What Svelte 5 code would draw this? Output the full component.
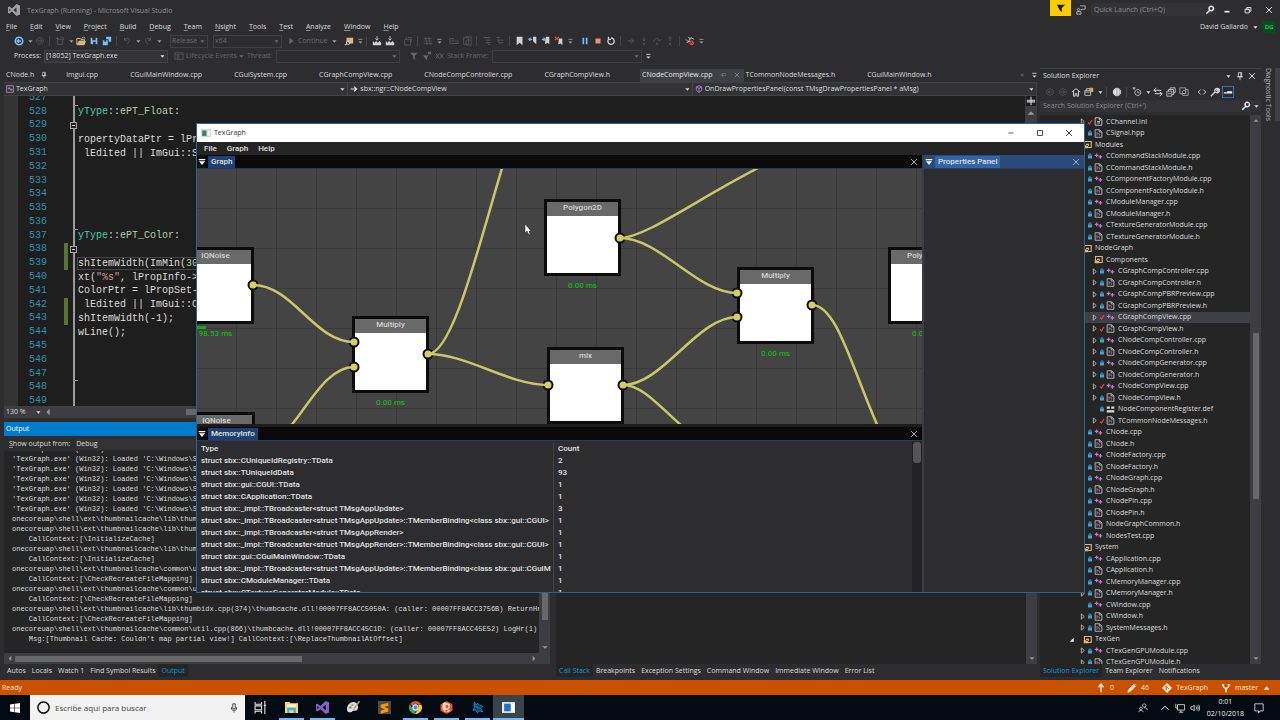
<script lang="ts">
  type Part = { d: string; fill?: string; stroke?: string; width?: number };

  const light = '#d0d0d0';
  const dim = '#56565a';
  const blue = '#75beff';
  const gold = '#dcb67a';

  const icons: Record<string, Part[]> = {
    back: [{ d: 'M6 1.5a4.5 4.5 0 1 0 .01 0M8.5 6H3.8M6 4 3.8 6 6 8', stroke: blue, width: 1.8 }],
    forward: [{ d: 'M6 2a4 4 0 1 0 .01 0M3.5 6h4.7M6 4l2.2 2L6 8', stroke: dim }],
    newItem: [{ d: 'M3 4h6v6H3zM1 3h4M3 1v4M6 2h4v3', stroke: dim }],
    open: [
      { d: 'M1 10V3h4l1 1h4v2H4z', stroke: gold, width: 1.2 },
      { d: 'M4 6h8l-2 5H1z', fill: gold },
      { d: 'M7 3 9 1l2 2', stroke: light },
    ],
    save: [{ d: 'M2 2h8v8H3L2 9zM4 2v3h4V2zM5 7v3h3V7z', fill: blue }],
    saveAll: [{ d: 'M5 1h6v6H8V4H5zM1 5h6v6H1zM3 5v2h2V5z', fill: blue }],
    undo: [{ d: 'M3 2v3h3M3 5c2-3 6-3 6 0 0 2-2 3-3 5', stroke: dim, width: 1.2 }],
    redo: [{ d: 'M9 2v3H6M9 5C7 2 3 2 3 5c0 2 2 3 3 5', stroke: dim, width: 1.2 }],
    play: [{ d: 'M4 2v8l5-4z', fill: '#66666a' }],
    find: [
      { d: 'M3 2h8v7H7L3 6z', fill: gold },
      { d: 'M5 6a2 2 0 1 0 .01 0M4 9l-3 2', stroke: light, width: 1.3 },
    ],
    build: [
      { d: 'M1 11V6l2 2 2-2 2 2 2-2 2 2v3z', fill: light },
      { d: 'M6 0v5M4 3l2 2 2-2', stroke: light },
    ],
    clip: [{ d: 'M2 4h7v7H2zM4 1v3M6 2h4v5', stroke: dim }],
    grid: [{ d: 'M1 3h10M1 6h10M1 9h10M3 1l2 10M7 1l2 10', stroke: dim }],
    box: [{ d: 'M1 3v6h10V6H5V3zM1 6h4', stroke: dim }],
    boxes: [{ d: 'M2 2h6v8H2zM5 5h6v6H5zM4 1h7v3', stroke: dim }],
    indent: [{ d: 'M2 2h8M5 5h5M5 8h5M7 10h3', stroke: dim, width: 1.2 }],
    outdent: [{ d: 'M2 2h4M4 5h6M6 8h4M3 4l3 6', stroke: dim, width: 1.2 }],
    bookmark: [{ d: 'M2 1h7v10L5.5 8 2 11z', fill: light }],
    markPrev: [
      { d: 'M6 1h4v9L8 8 6 6z', fill: light },
      { d: 'M5 4H1M3 2 1 4l2 2', stroke: blue, width: 1.3 },
    ],
    markNext: [
      { d: 'M6 1h4v9L8 8 5 10V6z', fill: light },
      { d: 'M1 4h4M3 2l2 2-2 2', stroke: blue, width: 1.3 },
    ],
    markClear: [
      { d: 'M6 3h4v8L8 9l-3 1z', fill: light },
      { d: 'M1 1l5 4M6 1 1 5', stroke: '#f05a3c', width: 1.3 },
    ],
    pause: [{ d: 'M3 2h2v8H3zM7 2h2v8H7z', fill: blue }],
    stop: [{ d: 'M3 3h6v6H3z', fill: '#f0907c' }],
    restart: [{ d: 'M3 4a3.8 3.8 0 1 0 3-1.6M3 1v3h3', stroke: light, width: 1.6 }],
    next: [{ d: 'M2 6h7M6 3l3 3-3 3', stroke: dim, width: 1.2 }],
    stepInto: [{ d: 'M6 1v5M4 4l2 2 2-2M5 9h2v1H5z', stroke: dim }],
    stepOver: [{ d: 'M2 7c0-5 7-5 7-1M7 4l2 2 2-2M5 9h2v1H5z', stroke: dim }],
    stepOut: [{ d: 'M6 6V1M4 3l2-2 2 2M5 9h2v1H5z', stroke: dim }],
    breakAll: [
      { d: 'M1 4l3 3 3-5 4 2M2 8l4-2M4 1l2 3', stroke: light },
      { d: 'M8 6a2.2 2.2 0 1 0 .01 0M6.5 10 10 7', stroke: '#f04040', width: 1.3 },
    ],
    filter: [{ d: 'M1 2h9L7 6v5L5 9V6z', fill: '#66666a' }],
    filterX: [{ d: 'M1 5h7L6 8v3L4 9zM7 1h4v3H7z', fill: '#66666a' }],
    threads: [{ d: 'M1 3l4 6M5 3 1 9M6 3l4 6M10 3 6 9', stroke: '#66666a' }],
    events: [{ d: 'M1 2h10v8H1zM1 4h10M4 5l3 2-3 2z', stroke: dim }],
    home: [{ d: 'M1 6l5-4 5 4M3 5v6h2V8h2v3h2V5', stroke: light, width: 1.2 }],
    sync: [
      { d: 'M1 4h7v6H1zM3 4V2h4v2M1 6h7', stroke: light },
      { d: 'M7 1h4v5H8z', fill: '#e0a54f' },
    ],
    globe: [
      { d: 'M6 1a5 5 0 1 0 .01 0', fill: '#dcdcdc' },
      { d: 'M6 1v10M8 2c2 2 2 6 0 8', stroke: '#9a9a9a' },
    ],
    history: [{ d: 'M7 3a3.6 3.6 0 1 0 .01 0M7 5v2h2M1 1h3L2.5 3z', stroke: light }],
    swap: [{ d: 'M1 4h9M4 1 1 4l3 2M11 8H2M8 6l3 2-3 3', stroke: light, width: 1.2 }],
    collapse: [{ d: 'M1 5h6v6H1zM3 5V3h6v6H7M5 3V1h6v6H9M2.5 8h3', stroke: light }],
    showAll: [{ d: 'M1 1h7v7H1zM8 3h3v7H4V8M6 4a2 2 0 1 0 .01 0', stroke: '#a8a8a8' }],
    code: [{ d: 'M4.5 3 1.5 6l3 3M7.5 3l3 3-3 3', stroke: light, width: 1.2 }],
    wrench: [{ d: 'M1 11l5-5M6 6c-1-3 1-5 4-4L8 4l1 1 2-2c1 3-2 5-5 3', stroke: light, width: 1.6 }],
    preview: [{ d: 'M1 7h10M5 6h6', stroke: '#f0f0f0', width: 1.6 }],
    search: [{ d: 'M7.5 1.5a2.7 2.7 0 1 0 .01 0M5.5 6.5 1.5 10.5', stroke: '#f0f0f0', width: 1.8 }],
    close: [{ d: 'M2.5 2.5l7 7M9.5 2.5l-7 7', stroke: 'currentColor', width: 1.2 }],
    maximize: [{ d: 'M3 3h6v6H3z', stroke: 'currentColor' }],
    minimize: [{ d: 'M3 6h6', stroke: 'currentColor' }],
    minimizeBold: [{ d: 'M3 8h6', stroke: '#f0f0f0', width: 2 }],
    restore: [{ d: 'M2.5 5h5v4.5h-5zM4.5 5V3h5v4.5h-2M2.5 5.5h5', stroke: '#d8d8d8', width: 1.2 }],
    pin: [{ d: 'M4 2h4v5H4zM2.5 7h7M6 7v4M7 2v5', stroke: 'currentColor' }],
    pinSide: [{ d: 'M1 6h4M5 3v6M5 4h5v3H5z', stroke: '#77777c' }],
    caret: [{ d: 'M4 5h5L6.5 8z', fill: 'currentColor' }],
    caretBar: [
      { d: 'M4 4h5', stroke: 'currentColor' },
      { d: 'M4 6.5h5L6.5 9z', fill: 'currentColor' },
    ],
    vs: [{ d: 'M8.5 0 12 1.5v9L8.5 12 4 7.5 1.5 9.5 0 9V3l1.5-.5L4 4.5zM8.5 3.5 5.5 6l3 2.5zM1.3 4.5v3L2.8 6z', fill: '#a0a0a4' }],
    flag: [{ d: 'M1 2h10L7 6v5L4.5 8.5z', fill: '#1b1b1c' }],
    feedback: [{ d: 'M5 1h6v4H8L6 6V5M3 4a1.5 1.5 0 1 0 .01 0M1 11V8h5v3z', stroke: '#c0c0c0' }],
    cpp: [{ d: 'M3.5 2v5M1 4.5h5M8.5 4v5M6 6.5h5', stroke: '#c177c9', width: 1.7 }],
    header: [
      { d: 'M1.5 1h6l3 3v7h-9zM7 1v3h3', stroke: '#bdbdbd', width: 1.2 },
      { d: 'M4 4v5M4 6.5h3.5V9', stroke: '#b57bc0' },
    ],
    doc: [{ d: 'M1.5 1h6l3 3v7h-9zM7 1v3h3M4 6h4M4 8h4', stroke: '#c8c8c8', width: 1.2 }],
    def: [{ d: 'M1 2h4v3H1zM7 2h4v3H7zM1 7h10v3H1z', fill: '#d8d8d8' }],
    folder: [
      { d: 'M2 10V2h9v8z', stroke: gold, width: 1.5 },
      { d: 'M1 7h6v4H1zM4 5h4v3H4z', fill: gold },
    ],
    lock: [
      { d: 'M2 5h8v6H2z', fill: '#3fa3d6' },
      { d: 'M4 6V2h4v4', stroke: '#3fa3d6', width: 1.6 },
    ],
    check: [{ d: 'M2 7l3 3 5-8', stroke: '#e8403c', width: 2.4 }],
    expanded: [{ d: 'M10 3v7H3z', fill: '#f0f0f0' }],
    collapsed: [{ d: 'M4 1.5 9 6l-5 4.5z', stroke: '#c8c8c8', width: 1.4 }],
    up: [{ d: 'M2 8h8L6 4z', fill: '#999' }],
    down: [{ d: 'M2 4h8L6 8z', fill: '#999' }],
    left: [{ d: 'M8 2v8L4 6z', fill: '#999' }],
    right: [{ d: 'M4 2v8l4-4z', fill: '#999' }],
    project: [
      { d: 'M1 1h10v10H1z', stroke: '#b9b9b9' },
      { d: 'M4.5 3v4M2.5 5h4M8 5v4M6 7h4', stroke: '#c177c9', width: 1.3 },
    ],
    arrow: [{ d: 'M1 6h9M6 2.5 10 6l-4 3.5', stroke: '#e0e0e0', width: 1.8 }],
    method: [{ d: 'M6 1l4 2v5l-4 3-4-3V3zM2 3l4 2 4-2M6 5v6', stroke: '#b180d7', width: 1.3 }],
    split: [{ d: 'M1 5h10M1 7h10M6 1v10', stroke: '#d8d8d8', width: 1.3 }],
    panelMenu: [{ d: 'M1 1.5h10v2H1zM1.5 5h9L6 10.5z', fill: '#fff' }],
    app: [
      { d: 'M0 1h12v10H0z', fill: '#d7d7d7' },
      { d: 'M1.5 3h5v6.5h-5z', fill: '#37806b' },
      { d: 'M8 3h2.5v6.5H8z', fill: '#f8f8f8' },
    ],
    push: [{ d: 'M6 11V2M3 5l3-3.5L9 5', stroke: '#ffe7d6', width: 1.8 }],
    pencil: [{ d: 'M1 11l1-3 6-6 2 2-6 6zM9 1l2 2', fill: '#ffe7d6', stroke: '#ffe7d6' }],
    git: [
      { d: 'M6 0l6 6-6 6-6-6z', fill: '#ffe7d6' },
      { d: 'M5 3v6M5 4l3 3', stroke: '#ca5100', width: 1.2 },
    ],
    branch: [{ d: 'M2.5 2v1c0 3 3.5 2 3.5 5v3M9.5 2v1c0 3-3.5 2-3.5 5M1 2h3M8 2h3', stroke: '#ffe7d6', width: 1.8 }],
    caretUp: [{ d: 'M2 8h7L5.5 4z', fill: '#ffe7d6' }],
    windows: [{ d: 'M0 1.8 5.3 1v4.7H0zM6 .9 12 0v5.7H6zM0 6.3h5.3V11L0 10.2zM6 6.3h6V12l-6-.9z', fill: '#fff' }],
    cortana: [{ d: 'M6 .9a5.1 5.1 0 1 0 .01 0', stroke: '#111', width: 1.4 }],
    mic: [{ d: 'M4.5 1h3v6h-3zM3 5v2.500C3 9 9 9 9 7.5V5M6 9v2.5', stroke: '#333' }],
    taskView: [{ d: 'M1 1v2h6V1M1 4.5h6V8H1zM1 11.5v-2h6v2M10 0v12M9 4h2', stroke: '#e4e4e4' }],
    explorer: [
      { d: 'M0 1h4l1 1h7v9H0z', fill: '#f6d673' },
      { d: 'M2 3h8v4H2z', fill: '#fff2b8' },
      { d: 'M2 6h8v5H8V8.5H4V11H2z', fill: '#4aa8e0' },
    ],
    vsTask: [{ d: 'M9 0l3 1.3v9.4L9 12 4 7.5 1.5 9.5 0 9V3l1.5-.5L4 4.5zM9 3.5 6 6l3 2.5zM1.3 4.5v3L2.8 6z', fill: '#8661c5' }],
    paint: [
      { d: 'M6 1C2 1 0 5 0 7.5 0 11 4 11 5 9.5S8 10 9.5 8 10 1 6 1z', fill: '#d4e2ee' },
      { d: 'M2 5h2v2H2z', fill: '#e4573d' },
      { d: 'M4 3h2v1.5H4z', fill: '#5dae4c' },
      { d: 'M11.5 0 6 8', stroke: '#d79b55', width: 1.3 },
    ],
    sublime: [
      { d: 'M0 0h12v12H0z', fill: '#4b4b4b' },
      { d: 'M9.5 1.5v2.8L5.5 5.5l4 1.4v2.8l-7 2V9l4-1.3-4-1.4V3.5z', fill: '#ff9800' },
    ],
    chrome: [
      { d: 'M6 0a6 6 0 0 1 5.3 3.2H6A2.8 2.8 0 0 0 3.4 5L1 2.7A6 6 0 0 1 6 0z', fill: '#e24a3b' },
      { d: 'M.8 3 3.5 7.4A2.8 2.8 0 0 0 6.5 8.7L5 12A6 6 0 0 1 .8 3z', fill: '#3aa757' },
      { d: 'M11.4 3.4A6 6 0 0 1 5.3 12L8.5 7.3A2.8 2.8 0 0 0 8 3.4z', fill: '#f9c927' },
      { d: 'M6 3.5a2.5 2.5 0 1 0 .01 0', fill: '#4a8af4', stroke: '#fff' },
    ],
    origin: [
      { d: 'M6 0l5.5 3v6L6 12 .5 9V3z', fill: '#e4572e' },
      { d: 'M4.5 10V4.500c0-2.500 4-2.500 4 .3S6 8 4.500 7M3 8V4c0-1 1-2 2-2.500M9 8.500l-2.500 1.500', stroke: '#fff', width: 1.1 },
    ],
    claw: [
      { d: 'M3 1l2 3 1-2 2 2 3 1-2 2 2 3-4-1-1 2-2-3-2 1 1-3-1-2z', fill: '#0b4468' },
      { d: 'M3 1l2 3 1-2 2 2 3 1-2 2 2 3-4-1-1 2-2-3-2 1 1-3zM4 5l4 2', stroke: '#2a8fd0', width: 0.8 },
    ],
    appTask: [
      { d: 'M0 1h12v10H0z', fill: '#eaeaea' },
      { d: 'M2 2.5h6v7H2z', fill: '#1f6fd0' },
      { d: 'M8.5 2.5H11v7H8.5z', fill: '#fff' },
    ],
    people: [{ d: 'M7.5 1a2 2 0 1 0 .01 0M3.5 5a1.6 1.6 0 1 0 .01 0M1 11c0-3 5-3 5 0M7 6c2-1 4 0 4 2.5', stroke: '#e4e4e4' }],
    chevronUp: [{ d: 'M1.5 8 6 4l4.5 4', stroke: '#e4e4e4', width: 1.2 }],
    network: [{ d: 'M3 2h8.5v6.5H3zM1 1v5h2M5 11h5M7 8.5V11', stroke: '#e4e4e4' }],
    volume: [{ d: 'M1 4.5h2L5 2.5v7l-2-2H1zM7 4c1 1 1 3 0 4M8.5 3c1.8 2 1.8 4 0 6M10 2c2.3 2.5 2.3 5.5 0 8', stroke: '#e4e4e4' }],
    notice: [{ d: 'M1 1h10v8.5H7.5L5.5 12V9.5H1z', stroke: '#e4e4e4' }],
  };
  icons.backOff = [{ d: 'M6 2a4 4 0 1 0 .01 0M8.5 6H3.8M6 4 3.8 6 6 8', stroke: dim }];

  const menus = ['File', 'Edit', 'View', 'Project', 'Build', 'Debug', 'Team', 'Nsight', 'Tools', 'Test', 'Analyze', 'Window', 'Help'];

  const toolbarStart = ['back', 'caret', 'forward', '|', 'newItem', 'caret', 'open', 'save', 'saveAll', '|', 'undo', 'caret', 'redo', 'caret', ' '];
  const toolbarEnd = [
    'caret', ' ', 'find', 'caretBar', '|', 'build', 'build', ' ', 'clip', '|', 'grid', 'caretBar', ' ', 'box', 'boxes', '|',
    'indent', 'outdent', '|', 'bookmark', 'markPrev', 'markNext', 'markClear', 'caretBar', ' ', 'pause', 'stop', 'restart', '|',
    'next', 'stepInto', 'stepOver', 'stepOut', '|', 'breakAll', 'caretBar',
  ];

  const tabs = [
    'CNode.h', 'imgui.cpp', 'CGuiMainWindow.cpp', 'CGuiSystem.cpp', 'CGraphCompView.cpp', 'CNodeCompController.cpp',
    'CGraphCompView.h', 'CNodeCompView.cpp', 'TCommonNodeMessages.h', 'CGuiMainWindow.h',
  ];
  let activeTab = 'CNodeCompView.cpp';

  const scopes = [
    { icon: 'project', text: 'TexGraph' },
    { icon: 'arrow', text: 'sbx::ngr::CNodeCompView' },
    { icon: 'method', text: 'OnDrawPropertiesPanel(const TMsgDrawPropertiesPanel * aMsg)' },
  ];

  // token kinds: t type, e enum value, s string, n number
  const source: Record<number, string[][]> = {
    528: [['t', 'yType'], ['', '::'], ['e', 'ePT_Float'], ['', ':']],
    530: [['', 'ropertyDataPtr = lPro']],
    531: [['', ' lEdited || ImGui::Sl']],
    537: [['t', 'yType'], ['', '::'], ['e', 'ePT_Color'], ['', ':']],
    539: [['', 'shItemWidth(ImMin('], ['n', '300']],
    540: [['', 'xt('], ['s', '"%s"'], ['', ', lPropInfo->n']],
    541: [['', 'ColorPtr = lPropSet->']],
    542: [['', ' lEdited || ImGui::Co']],
    543: [['', 'shItemWidth(-1);']],
    544: [['', 'wLine();']],
  };
  const changed = [538, 539, 542, 543];
  const folds = [529, 538];
  const ticks = [528, 537, 548];
  const lines = Array.from({ length: 23 }, (_, i) => 527 + i);

  const load = `'TexGraph.exe' (Win32): Loaded 'C:\\Windows\\Sys`;
  const cache = 'onecoreuap\\shell\\ext\\thumbnailcache\\';
  const initialize = '    CallContext:[\\InitializeCache]';
  const recreate = '    CallContext:[\\CheckRecreateFileMapping]';
  const output = [
    load, load, load, load, load, load, load,
    cache + 'lib\\thumbc',
    cache + 'lib\\thumbc',
    initialize,
    cache + 'lib\\thumbc',
    initialize,
    cache + 'common\\uti',
    recreate,
    cache + 'common\\uti',
    recreate,
    cache + 'lib\\thumbidx.cpp(374)\\thumbcache.dll!00007FF8ACC5050A: (caller: 00007FF8ACC3756B) ReturnHr(13) t',
    recreate,
    cache + 'common\\util.cpp(866)\\thumbcache.dll!00007FF8ACC45C1D: (caller: 00007FF8ACC45E52) LogHr(1) tid(17',
    `    Msg:[Thumbnail Cache: Couldn't map partial view!] CallContext:[\\ReplaceThumbnailAtOffset]`,
  ];

  const outputTabs = ['Autos', 'Locals', 'Watch 1', 'Find Symbol Results', 'Output'];
  const debugTabs = ['Call Stack', 'Breakpoints', 'Exception Settings', 'Command Window', 'Immediate Window', 'Error List'];
  const explorerTabs = ['Solution Explorer', 'Team Explorer', 'Notifications'];
  const explorerTools = ['backOff', 'forward', 'home', 'sync', 'caret', '|', 'globe', '|', 'history', 'caret', 'swap', 'collapse', 'showAll', ' ', 'code', 'wrench'];

  // depth, name, flags: m modified, x no expander, f folder
  const tree: [number, string, string][] = [
    [1, 'CChannel.inl', 'm'], [1, 'CSignal.hpp', ''],
    [0, 'Modules', 'f'],
    [1, 'CCommandStackModule.cpp', ''], [1, 'CCommandStackModule.h', ''],
    [1, 'CComponentFactoryModule.cpp', ''], [1, 'CComponentFactoryModule.h', ''],
    [1, 'CModuleManager.cpp', ''], [1, 'CModuleManager.h', ''],
    [1, 'CTextureGeneratorModule.cpp', ''], [1, 'CTextureGeneratorModule.h', ''],
    [0, 'NodeGraph', 'f'], [1, 'Components', 'f'],
    [2, 'CGraphCompController.cpp', ''], [2, 'CGraphCompController.h', ''],
    [2, 'CGraphCompPBRPreview.cpp', ''], [2, 'CGraphCompPBRPreview.h', ''],
    [2, 'CGraphCompView.cpp', 'm'], [2, 'CGraphCompView.h', 'm'],
    [2, 'CNodeCompController.cpp', ''], [2, 'CNodeCompController.h', ''],
    [2, 'CNodeCompGenerator.cpp', ''], [2, 'CNodeCompGenerator.h', ''],
    [2, 'CNodeCompView.cpp', 'm'], [2, 'CNodeCompView.h', ''],
    [2, 'NodeComponentRegister.def', 'x'], [2, 'TCommonNodeMessages.h', 'm'],
    [1, 'CNode.cpp', ''], [1, 'CNode.h', ''], [1, 'CNodeFactory.cpp', ''], [1, 'CNodeFactory.h', ''],
    [1, 'CNodeGraph.cpp', ''], [1, 'CNodeGraph.h', ''], [1, 'CNodePin.cpp', ''], [1, 'CNodePin.h', ''],
    [1, 'NodeGraphCommon.h', ''], [1, 'NodesTest.cpp', ''],
    [0, 'System', 'f'],
    [1, 'CApplication.cpp', ''], [1, 'CApplication.h', ''], [1, 'CMemoryManager.cpp', ''], [1, 'CMemoryManager.h', ''],
    [1, 'CWindow.cpp', 'x'], [1, 'CWindow.h', ''], [1, 'SystemMessages.h', ''],
    [0, 'TexGen', 'f'],
    [1, 'CTexGenGPUModule.cpp', ''], [1, 'CTexGenGPUModule.h', ''],
  ];

  function fileIcon(name: string, flags: string) {
    if (flags === 'f') return 'folder';
    if (name.endsWith('.cpp')) return 'cpp';
    if (name.endsWith('.inl')) return 'doc';
    if (name.endsWith('.def')) return 'def';
    return 'header';
  }

  const nodes = [
    { title: 'IQNoise', time: '98.53 ms', x: -20, y: 78, load: true },
    { title: 'IQNoise', time: '', x: -19, y: 243 },
    { title: 'Multiply', time: '0.00 ms', x: 155, y: 147 },
    { title: 'Polygon2D', time: '0.00 ms', x: 347, y: 30 },
    { title: 'mix', time: '', x: 350, y: 178 },
    { title: 'Multiply', time: '0.00 ms', x: 540, y: 98 },
    { title: 'Polygon2D', time: '0.00 ms', x: 691, y: 78 },
  ];

  const wires = [
    'M56 116C96 116 117 173 157 173',
    'M57 281C97 281 117 198 157 198',
    'M231 185C271 185 311 216 351 216',
    'M231 185C256 185 282 75 306-4',
    'M423 69C448 69 500 30 563-2',
    'M423 69C463 69 500 124 540 124',
    'M426 216C466 216 500 148 540 148',
    'M426 216C446 216 465 240 485 257',
    'M615 136C640 136 655 200 682 260',
  ];
  const pins = [[56, 116], [157, 173], [157, 198], [231, 185], [423, 69], [351, 216], [426, 216], [540, 124], [540, 148], [615, 136]];

  const memory: [string, number][] = [
    ['struct sbx::CUniqueIdRegistry::TData', 2],
    ['struct sbx::TUniqueIdData', 93],
    ['struct sbx::gui::CGUI::TData', 1],
    ['struct sbx::CApplication::TData', 1],
    ['struct sbx::_impl::TBroadcaster<struct TMsgAppUpdate>', 3],
    ['struct sbx::_impl::TBroadcaster<struct TMsgAppUpdate>::TMemberBinding<class sbx::gui::CGUI>', 1],
    ['struct sbx::_impl::TBroadcaster<struct TMsgAppRender>', 1],
    ['struct sbx::_impl::TBroadcaster<struct TMsgAppRender>::TMemberBinding<class sbx::gui::CGUI>', 1],
    ['struct sbx::gui::CGuiMainWindow::TData', 1],
    ['struct sbx::_impl::TBroadcaster<struct TMsgAppUpdate>::TMemberBinding<class sbx::gui::CGuiM', 1],
    ['struct sbx::CModuleManager::TData', 1],
    ['struct sbx::CTextureGeneratorModule::TData', 1],
  ];

  const apps = [
    { icon: 'taskView', running: false },
    { icon: 'explorer', running: true },
    { icon: 'vsTask', running: true },
    { icon: 'paint', running: false },
    { icon: 'sublime', running: false },
    { icon: 'chrome', running: true },
    { icon: 'origin', running: true },
    { icon: 'claw', running: true },
    { icon: 'appTask', running: true },
  ];
</script>

{#snippet icon(name: string)}
  <svg class="icon" viewBox="0 0 12 12" aria-hidden="true">
    {#each icons[name] as part}
      <path d={part.d} fill={part.fill ?? 'none'} fill-rule="evenodd" stroke={part.stroke ?? 'none'} stroke-width={part.width ?? 1} />
    {/each}
  </svg>
{/snippet}

{#snippet tools(names: string[])}
  {#each names as name}
    {#if name === '|'}
      <span class="sep"></span>
    {:else if name === ' '}
      <span class="space"></span>
    {:else}
      <button class="tool" class:narrow={name.startsWith('caret')} aria-label={name}>{@render icon(name)}</button>
    {/if}
  {/each}
{/snippet}

{#snippet dockTabs(names: string[], current: string)}
  <div class="dock-tabs">
    {#each names as name}
      <button class:current={name === current}>{name}</button>
    {/each}
  </div>
{/snippet}

<div class="desktop">
  <header class="titlebar">
    <span class="logo">{@render icon('vs')}</span>
    <span class="title">TexGraph (Running) - Microsoft Visual Studio</span>
    <button class="flag" aria-label="Notifications">{@render icon('flag')}</button>
    <button class="tool feedback" aria-label="Feedback">{@render icon('feedback')}</button>
    <label class="quick">
      <input type="text" placeholder="Quick Launch (Ctrl+Q)" aria-label="Quick Launch" />
      {@render icon('search')}
    </label>
    <div class="win-buttons">
      <button class="tool" aria-label="Minimize">{@render icon('minimizeBold')}</button>
      <button class="tool" aria-label="Restore">{@render icon('restore')}</button>
      <button class="tool" aria-label="Close">{@render icon('close')}</button>
    </div>
  </header>

  <nav class="menubar">
    {#each menus as menu}
      <button><u>{menu[0]}</u>{menu.slice(1)}</button>
    {/each}
    <div class="account">
      <span>David Gallardo</span>
      <span class="tool narrow">{@render icon('caret')}</span>
      <span class="avatar">DG</span>
    </div>
  </nav>

  <div class="toolbar">
    {@render tools(toolbarStart)}
    <div class="combo config">
      <select aria-label="Configuration" disabled><option>Release</option></select>{@render icon('caret')}
    </div>
    <div class="combo platform">
      <select aria-label="Platform" disabled><option>x64</option></select>{@render icon('caret')}
    </div>
    <button class="tool" aria-label="Run">{@render icon('play')}</button>
    <button class="continue" disabled>Continue</button>
    {@render tools(toolbarEnd)}
  </div>

  <div class="toolbar process">
    <label for="process">Process:</label>
    <div class="combo wide on">
      <select id="process"><option>[18052] TexGraph.exe</option></select>{@render icon('caret')}
    </div>
    <button class="tool events" aria-label="Events">{@render icon('events')}</button>
    <span class="off">Lifecycle Events</span>
    <button class="tool narrow off" aria-label="More events">{@render icon('caret')}</button>
    <label class="off thread" for="thread">Thread:</label>
    <div class="combo wide">
      <select id="thread" disabled><option></option></select>{@render icon('caret')}
    </div>
    <span class="space"></span>
    {@render tools(['filter', 'filterX', 'threads'])}
    <label class="off" for="frame">Stack Frame:</label>
    <div class="combo frame">
      <select id="frame" disabled><option></option></select>{@render icon('caret')}
    </div>
    <span class="tool narrow">{@render icon('caretBar')}</span>
  </div>

  <main class="workspace">
    <section class="left">
      <div class="tabs">
        {#each tabs as tab}
          <button class="tab" class:active={tab === activeTab} on:click={() => (activeTab = tab)}>
            {tab}
            {#if tab === 'CNode.h'}
              <span class="tab-icon pinned">{@render icon('pin')}</span>
            {:else if tab === activeTab}
              <span class="tab-icon">{@render icon('pinSide')}</span>
              <span class="tab-icon">{@render icon('close')}</span>
            {/if}
          </button>
        {/each}
        <span class="overflow">«</span>
        <button class="tool narrow" aria-label="Open files">{@render icon('caretBar')}</button>
      </div>
      <div class="scopes">
        {#each scopes as scope}
          <div class="scope">
            {@render icon(scope.icon)}
            <select aria-label="Scope"><option>{scope.text}</option></select>
            {@render icon('caret')}
          </div>
        {/each}
      </div>
      <div class="editor">
        <div class="lines">
          {#each lines as n}
            <div class="line">
              <span class="margin"></span>
              <span class="number">{n}</span>
              <span class="change" class:changed={changed.includes(n)}></span>
              <span class="fold" class:tick={ticks.includes(n)}>
                {#if folds.includes(n)}<span class="fold-box"></span>{/if}
              </span>
              <code class:cursor-line={n === 539}>{#each source[n] ?? [] as [kind, text]}<span class={kind}>{text}</span>{/each}</code>
            </div>
          {/each}
        </div>
        <div class="editor-bar">
          {@render icon('split')}
          {@render icon('up')}
        </div>
      </div>
      <div class="zoom-bar">
        <span>130 %</span>
        {@render icon('caret')}
        {@render icon('left')}
        <span class="zoom-thumb"></span>
      </div>

      <div class="docks">
        <section class="dock output">
          <h2>Output</h2>
          <div class="output-from">
            <label for="from"><u>S</u>how output from:</label>
            <select id="from"><option>Debug</option></select>
          </div>
          <div class="output-body">
            <pre>{output.join('\n')}</pre>
            <div class="vbar">
              <span class="vthumb"></span>
              {@render icon('down')}
            </div>
          </div>
          <div class="hbar">
            {@render icon('left')}
            <span class="hthumb"></span>
            {@render icon('right')}
          </div>
          {@render dockTabs(outputTabs, 'Output')}
        </section>
        <section class="dock calls">
          <div class="output-body">
            <div class="blank"></div>
            <div class="vbar">{@render icon('down')}</div>
          </div>
          {@render dockTabs(debugTabs, 'Call Stack')}
        </section>
      </div>
    </section>

    <aside class="explorer">
      <div class="explorer-head">
        <h2>Solution Explorer</h2>
        <span class="tool">{@render icon('caret')}</span>
        <button class="tool" aria-label="Pin">{@render icon('pin')}</button>
        <button class="tool" aria-label="Close panel">{@render icon('close')}</button>
      </div>
      <div class="explorer-tools">
        {@render tools(explorerTools)}
        <button class="tool preview" aria-label="Preview">{@render icon('preview')}</button>
      </div>
      <label class="explorer-search">
        <input type="text" placeholder="Search Solution Explorer (Ctrl+')" aria-label="Search Solution Explorer" />
        {@render icon('search')}
        {@render icon('caret')}
      </label>
      <div class="tree-wrap">
        <ul class="tree">
          {#each tree as [depth, name, flags]}
            <li class="depth-{depth}" class:picked={name === 'CGraphCompView.cpp'}>
              <span class="expander">
                {#if flags !== 'x'}{@render icon(flags === 'f' ? 'expanded' : 'collapsed')}{/if}
              </span>
              <span class="state">
                {#if flags !== 'f'}{@render icon(flags === 'm' ? 'check' : 'lock')}{/if}
              </span>
              <span class="file">{@render icon(fileIcon(name, flags))}</span>
              {name}
            </li>
          {/each}
        </ul>
        <div class="vbar">
          {@render icon('up')}
          <span class="tree-thumb"></span>
          {@render icon('down')}
        </div>
      </div>
      {@render dockTabs(explorerTabs, 'Solution Explorer')}
    </aside>
    <div class="side"><button>Diagnostic Tools</button></div>
  </main>

  <footer class="status">
    <span class="ready">Ready</span>
    <span class="stat">{@render icon('push')}0</span>
    <span class="stat">{@render icon('pencil')}46</span>
    <span class="stat">{@render icon('git')}TexGraph</span>
    <span class="stat">{@render icon('branch')}master {@render icon('caretUp')}</span>
  </footer>

  <footer class="taskbar">
    <button class="start" aria-label="Start">{@render icon('windows')}</button>
    <label class="cortana">
      {@render icon('cortana')}
      <input type="text" placeholder="Escribe aquí para buscar" aria-label="Buscar" />
      {@render icon('mic')}
    </label>
    {#each apps as app}
      <button class="app" class:running={app.running} class:front={app.icon === 'appTask'} aria-label={app.icon}>{@render icon(app.icon)}</button>
    {/each}
    <div class="tray">
      <span class="people">{@render icon('people')}</span>
      {@render icon('chevronUp')}
      {@render icon('network')}
      {@render icon('volume')}
      <time><span>0:01</span><span>02/10/2018</span></time>
      {@render icon('notice')}
    </div>
  </footer>

  <section class="window">
    <header class="window-title">
      {@render icon('app')}
      <span>TexGraph</span>
      <button aria-label="Minimize window">{@render icon('minimize')}</button>
      <button aria-label="Maximize window">{@render icon('maximize')}</button>
      <button aria-label="Close window">{@render icon('close')}</button>
    </header>
    <nav class="window-menu">
      <button>File</button>
      <button>Graph</button>
      <button>Help</button>
    </nav>
    <div class="window-body">
      <div class="main-col">
        <div class="panel-head">
          {@render icon('panelMenu')}
          <button class="panel-tab">Graph</button>
          <button class="panel-close" aria-label="Close Graph">{@render icon('close')}</button>
        </div>
        <div class="canvas">
          {#each nodes as node}
            <div class="node" style="left: {node.x}px; top: {node.y}px">
              <div class="node-box">
                <div class="node-title">{node.title}</div>
              </div>
              {#if node.load}<span class="load"></span>{/if}
              <span class="time">{node.time}</span>
            </div>
          {/each}
          <svg class="wires" aria-hidden="true">
            {#each pins as [x, y]}
              <circle cx={x} cy={y} r="5.5" fill="#0b0b0b" />
            {/each}
            {#each wires as d}
              <path {d} fill="none" stroke="#c9c76a" stroke-width="2.5" />
            {/each}
            {#each pins as [x, y]}
              <circle cx={x} cy={y} r="3.5" fill="#d3cf62" />
            {/each}
            <path d="M328 55v9l2-2 2 4 1-1-1-3h2z" fill="#fff" stroke="#222" stroke-width="0.5" />
          </svg>
        </div>
        <div class="panel-head memory-head">
          {@render icon('panelMenu')}
          <button class="panel-tab">MemoryInfo</button>
          <button class="panel-close" aria-label="Close MemoryInfo">{@render icon('close')}</button>
        </div>
        <div class="memory">
          <div class="memory-list">
            <table>
              <thead>
                <tr><th>Type</th><th>Count</th></tr>
              </thead>
              <tbody>
                {#each memory as [type, count]}
                  <tr><td>{type}</td><td>{count}</td></tr>
                {/each}
              </tbody>
            </table>
          </div>
          <div class="memory-bar"><span></span></div>
        </div>
      </div>
      <div class="props">
        <div class="panel-head focused">
          {@render icon('panelMenu')}
          <button class="panel-tab">Properties Panel</button>
          <button class="panel-close" aria-label="Close Properties">{@render icon('close')}</button>
        </div>
      </div>
    </div>
  </section>
</div>

<style>
  :global(body) {
    background: #2d2d30;
  }

  .desktop {
    position: relative;
    display: flex;
    flex-direction: column;
    height: 100vh;
    overflow: hidden;
    background: #2d2d30;
    color: #dcdcdc;
    font: 7px/10px "Open Sans", "Noto Sans", sans-serif;
    white-space: nowrap;
  }

  button,
  input,
  select {
    margin: 0;
    padding: 0;
    border: none;
    border-radius: 0;
    outline: none;
    background: none;
    color: inherit;
    font: inherit;
    opacity: 1;
    appearance: none;
  }

  select,
  input {
    flex: 1;
    min-width: 0;
  }

  input::placeholder {
    color: #8c8c90;
    opacity: 1;
  }

  h2 {
    margin: 0;
    font: inherit;
  }

  u {
    text-underline-offset: 1px;
    text-decoration-thickness: 1px;
    text-decoration-color: #8a8a8a;
  }

  .icon {
    display: block;
    flex: none;
    width: 10px;
    height: 10px;
  }

  /* title and menus */
  .titlebar {
    display: flex;
    align-items: center;
    height: 19px;
    padding-left: 8px;
  }

  .logo .icon {
    width: 12px;
    height: 12px;
  }

  .title {
    flex: 1;
    padding: 2px 0 0 7px;
    color: #8e8e92;
  }

  .flag {
    display: flex;
    align-items: center;
    justify-content: center;
    align-self: flex-start;
    width: 21px;
    height: 16px;
    background: #ffcc00;
  }

  .feedback {
    margin: 0 4px;
  }

  .quick {
    display: flex;
    align-items: center;
    width: 121px;
    height: 13px;
    padding: 0 1px 0 3px;
    background: #333337;
  }

  .win-buttons {
    display: flex;
    gap: 9px;
    padding: 0 5px;
  }

  .menubar {
    display: flex;
    align-items: center;
    gap: 13px;
    height: 15px;
    padding: 0 5px 0 6px;
  }

  .account {
    display: flex;
    align-items: center;
    gap: 3px;
    margin-left: auto;
  }

  .avatar {
    width: 12px;
    height: 12px;
    margin-left: 2px;
    background: #00501c;
    color: #7fd197;
    font-size: 6px;
    line-height: 12px;
    text-align: center;
  }

  .toolbar {
    display: flex;
    align-items: center;
    gap: 1px;
    height: 14px;
    padding-left: 13px;
    color: #a0a0a4;
  }

  .tool {
    display: flex;
    flex: none;
    align-items: center;
    justify-content: center;
    width: 12px;
    height: 12px;
  }

  .tool.narrow {
    width: 7px;
  }

  .sep {
    width: 1px;
    height: 10px;
    margin: 0 3px 0 2px;
    background: #46464a;
  }

  .space {
    width: 4px;
  }

  .combo {
    display: flex;
    align-items: center;
    height: 11px;
    margin: 0 2px;
    padding-left: 1px;
    border: 1px solid #3f3f43;
    color: #6a6a6e;
  }

  .combo.on {
    border-color: #434346;
    background: #333337;
    color: #dcdcdc;
  }

  .config {
    width: 35px;
  }

  .platform {
    width: 66px;
  }

  .wide {
    width: 121px;
  }

  .frame {
    width: 147px;
  }

  .continue {
    width: 31px;
    color: #6a6a6e;
    text-align: left;
  }

  .process {
    height: 16px;
    margin-bottom: 4px;
    padding-left: 14px;
    color: #dcdcdc;
  }

  .events {
    margin-left: 2px;
  }

  .thread {
    padding: 0 1px;
  }

  .off {
    color: #66666a;
  }

  /* editor */
  .workspace {
    display: flex;
    flex: 1;
    min-height: 0;
  }

  .left {
    display: flex;
    flex: 1;
    flex-direction: column;
    min-width: 0;
    padding: 0 3px 0 4px;
  }

  .tabs {
    display: flex;
    align-items: center;
    height: 14px;
    border-bottom: 1px solid #3f3f46;
  }

  .tab {
    display: flex;
    align-items: center;
    height: 13px;
    padding: 0 30px 0 2px;
  }

  .tab:first-child {
    padding-right: 16px;
  }

  .tab.active {
    padding-right: 3px;
    background: #3f3f46;
    color: #e6e6ee;
  }

  .tab.active .tab-icon {
    margin-left: 6px;
    color: #85858a;
  }

  .tab-icon .icon {
    width: 8px;
    height: 8px;
  }

  .tab .pinned {
    margin-left: 6px;
  }

  .overflow {
    margin-left: auto;
    padding-right: 6px;
    color: #77777c;
  }

  .scopes {
    display: flex;
    height: 13px;
  }

  .scope {
    display: flex;
    flex: 1;
    align-items: center;
    gap: 2px;
    padding-left: 2px;
    border: solid #434346;
    border-width: 0 1px 1px 0;
    background: #333337;
  }

  .scope .icon:first-child {
    width: 8px;
    height: 8px;
  }

  .editor {
    display: flex;
    flex: 1;
    min-height: 0;
    overflow: hidden;
    background: #1e1e1e;
  }

  .lines {
    display: grid;
    flex: 1;
    grid-auto-rows: 1fr;
    margin: -5px 0 -2px;
    font-family: "Liberation Mono", monospace;
    font-size: 10px;
  }

  .line {
    display: flex;
    align-items: center;
    min-height: 0;
  }

  .margin {
    align-self: stretch;
    width: 14px;
    background: #333333;
  }

  .number {
    width: 29px;
    color: #2b91af;
    text-align: right;
  }

  .change {
    align-self: stretch;
    width: 4px;
    margin-left: 17px;
  }

  .changed {
    background: #577430;
  }

  .fold {
    display: flex;
    align-items: center;
    align-self: stretch;
    width: 10px;
    background: linear-gradient(#9a9a9a, #9a9a9a) 5px 0 / 2px 100% no-repeat;
  }

  .tick {
    border-top: 1px solid transparent;
    border-image: linear-gradient(90deg, transparent 50%, #9a9a9a 50%) 1;
  }

  .fold-box {
    width: 5px;
    height: 5px;
    margin-left: 2px;
    border: 1px solid #a5a5a5;
    background: linear-gradient(#d0d0d0, #d0d0d0) 1px 2px / 3px 1px no-repeat #1e1e1e;
  }

  code {
    flex: 1;
    font: inherit;
    line-height: 13px;
    white-space: pre;
  }

  .cursor-line {
    line-height: 11px;
    outline: 1px solid #464646;
  }

  .t {
    color: #4ec9b0;
  }

  .e,
  .n {
    color: #b5cea8;
  }

  .s {
    color: #d69d85;
  }

  .editor-bar {
    display: flex;
    flex-direction: column;
    align-items: center;
    gap: 2px;
    width: 12px;
    background: #3e3e42;
  }

  .editor-bar .icon:first-child {
    background: #1b1b1c;
  }

  .zoom-bar {
    display: flex;
    align-items: center;
    height: 12px;
    margin-bottom: 4px;
    padding-left: 2px;
    background: #3e3e42;
  }

  .zoom-bar .icon:nth-of-type(1) {
    margin-left: 7px;
  }

  .zoom-thumb {
    width: 400px;
    height: 6px;
    margin-left: 133px;
    background: #686868;
  }

  /* docks */
  .docks {
    display: flex;
    gap: 6px;
    height: 258px;
  }

  .dock {
    display: flex;
    flex-direction: column;
    min-width: 0;
  }

  .output {
    flex: 546 1 0;
  }

  .calls {
    flex: 481 1 0;
  }

  .output h2 {
    padding: 2px;
    background: #007acc;
    color: #fff;
  }

  .output-from {
    display: flex;
    align-items: center;
    gap: 6px;
    height: 15px;
    padding-left: 5px;
  }

  .output-from select {
    background: #333337;
  }

  .output-body {
    display: flex;
    flex: 1;
    min-height: 0;
    background: #252526;
  }

  .blank {
    flex: 1;
  }

  pre {
    flex: 1;
    min-width: 0;
    margin: -7px 0 0;
    padding: 0 0 0 8px;
    overflow: hidden;
    clip-path: inset(7px 0 0 0);
    font: 7px/10px "Liberation Mono", monospace;
  }

  .vbar {
    display: flex;
    flex-direction: column;
    align-items: center;
    justify-content: flex-end;
    width: 11px;
    background: #3e3e42;
  }

  .vbar .icon,
  .hbar .icon {
    width: 8px;
    height: 11px;
  }

  .vthumb {
    width: 6px;
    height: 74px;
    margin-bottom: 22px;
    background: #686868;
  }

  .hbar {
    display: flex;
    align-items: center;
    height: 11px;
    padding: 0 12px 0 2px;
    background: #3e3e42;
  }

  .hthumb {
    width: 54%;
    height: 6px;
    margin: 0 auto 0 1px;
    background: #686868;
  }

  .dock-tabs {
    display: flex;
    align-items: flex-start;
    height: 16px;
  }

  .dock-tabs button {
    height: 13px;
    padding: 0 3px;
  }

  .dock-tabs .current {
    background: #252526;
    color: #0e97dd;
  }

  /* solution explorer */
  .explorer {
    display: flex;
    flex-direction: column;
    width: 221px;
    background: #2d2d30;
  }

  .explorer-head {
    display: flex;
    align-items: center;
    height: 14px;
    padding: 0 3px;
    border-top: 1px solid #3f3f46;
  }

  .explorer-head h2 {
    flex: 1;
  }

  .explorer-tools {
    display: flex;
    align-items: center;
    gap: 1px;
    height: 17px;
    padding-left: 4px;
  }

  .preview {
    border: 1px solid #2f6db5;
  }

  .explorer-search {
    display: flex;
    align-items: center;
    height: 12px;
    margin-bottom: 3px;
    padding-left: 3px;
    background: #333337;
  }

  .tree-wrap {
    display: flex;
    flex: 1;
    min-height: 0;
    overflow: hidden;
    background: #252526;
  }

  .tree {
    display: grid;
    flex: 1;
    grid-auto-rows: 1fr;
    margin: 1px 0 -4px;
    padding: 0;
    list-style: none;
  }

  .tree li {
    display: flex;
    align-items: center;
    min-height: 0;
    padding-left: 28px;
  }

  .tree .depth-1 {
    padding-left: 39px;
  }

  .tree .depth-2 {
    padding-left: 51px;
  }

  .tree .picked {
    background: #3f3f46;
  }

  .expander {
    width: 8px;
  }

  .state {
    width: 7px;
  }

  .file {
    width: 12px;
  }

  .expander .icon {
    width: 7px;
    height: 7px;
  }

  .state .icon {
    width: 6px;
    height: 6px;
  }

  .file .icon {
    width: 9px;
    height: 9px;
  }

  .tree-thumb {
    width: 6px;
    height: 166px;
    margin: auto 0 154px;
    background: #686868;
  }

  .side {
    width: 19px;
  }

  .side button {
    width: 18px;
    margin-left: 1px;
    padding-right: 2px;
    border-right: 5px solid #3f3f46;
    color: #b8b8b8;
    writing-mode: vertical-rl;
  }

  /* status and taskbar */
  .status {
    display: flex;
    align-items: center;
    gap: 13px;
    height: 15px;
    padding: 0 8px 0 2px;
    background: #ca5100;
    color: #ffe7d6;
  }

  .ready {
    flex: 1;
  }

  .stat {
    display: flex;
    align-items: center;
    gap: 4px;
  }

  .taskbar {
    display: flex;
    align-items: stretch;
    height: 25px;
    background: #040a12;
  }

  .start {
    display: flex;
    align-items: center;
    justify-content: center;
    width: 30px;
  }

  .cortana {
    display: flex;
    align-items: center;
    gap: 5px;
    width: 202px;
    padding: 0 6px 0 7px;
    background: #f2f2f2;
    font-size: 8px;
  }

  .cortana .icon:first-child {
    width: 13px;
    height: 13px;
  }

  .cortana input::placeholder {
    color: #444;
  }

  .app {
    display: flex;
    align-items: center;
    justify-content: center;
    width: 25px;
    margin: 0 3px;
    border: solid transparent;
    border-width: 2px 0;
  }

  .app .icon {
    width: 13px;
    height: 13px;
  }

  .running {
    border-bottom-color: #76b9ed;
  }

  .front {
    width: 31px;
    margin: 0;
    border-top-color: #3a424a;
    background: #3a424a;
  }

  .tray {
    display: flex;
    align-items: center;
    gap: 5px;
    margin-left: auto;
    padding-right: 16px;
  }

  .people {
    margin-right: 7px;
  }

  time {
    display: flex;
    flex-direction: column;
    align-items: center;
    margin: 0 5px 0 2px;
    color: #f0f0f0;
    line-height: 12px;
  }

  /* floating application window */
  .window {
    position: absolute;
    top: 123px;
    right: 195px;
    bottom: 127px;
    left: 196px;
    display: flex;
    flex-direction: column;
    border: 1px solid #2a6496;
    background: #2d2d30;
    color: #e0e0e0;
    font-family: Roboto, sans-serif;
    font-weight: 500;
  }

  .window-title {
    display: flex;
    align-items: center;
    height: 18px;
    padding: 0 1px 0 4px;
    background: #fff;
    color: #333;
    font: 7px/10px "Open Sans", "Noto Sans", sans-serif;
  }

  .window-title span {
    flex: 1;
    padding-left: 3px;
  }

  .window-title button {
    display: flex;
    justify-content: center;
    width: 29px;
  }

  .window-menu {
    display: flex;
    gap: 10px;
    height: 13px;
    padding-left: 7px;
    background: #242424;
    font-size: 8px;
  }

  .window-body {
    display: flex;
    flex: 1;
    min-height: 0;
  }

  .main-col {
    display: flex;
    flex: 1;
    flex-direction: column;
    min-width: 0;
  }

  .panel-head {
    display: flex;
    align-items: center;
    height: 13px;
    padding: 0 3px 0 1px;
    border-bottom: 1px solid #263a63;
    background: #0a0a0a;
    font-size: 8px;
  }

  .panel-head .icon {
    width: 8px;
    height: 8px;
  }

  .panel-tab {
    height: 12px;
    margin-left: 2px;
    padding: 0 3px;
    background: #22406f;
  }

  .panel-close {
    margin-left: auto;
    color: #a8a8a8;
  }

  .panel-head .panel-close .icon {
    width: 10px;
    height: 10px;
  }

  .canvas {
    position: relative;
    flex: 1;
    overflow: hidden;
    background:
      repeating-linear-gradient(90deg, transparent 0 39px, #3a3a3a 39px 40px),
      repeating-linear-gradient(transparent 0 39px, #3a3a3a 39px 40px),
      #444444;
  }

  .node {
    position: absolute;
    display: flex;
    flex-direction: column;
    width: 77px;
  }

  .node-box {
    height: 71px;
    border: 3px solid #0b0b0b;
    background: #fff;
  }

  .node-title {
    height: 14px;
    background: #696969;
    color: #d4d4d4;
    font-size: 8px;
    line-height: 12px;
    text-align: center;
  }

  .load {
    width: 29px;
    height: 3px;
    margin-top: 2px;
    margin-bottom: -5px;
    background: #12a812;
  }

  .time {
    margin-top: 5px;
    color: #18b018;
    font-size: 8px;
    text-align: center;
  }

  .wires {
    position: absolute;
    width: 100%;
    height: 100%;
  }

  .memory-head {
    border-top: 3px solid #1c1c1e;
  }

  .memory {
    display: flex;
    height: 151px;
    overflow: hidden;
  }

  .memory-list {
    flex: 1;
    min-width: 0;
    padding-top: 2px;
  }

  table {
    width: 100%;
    border-spacing: 0;
    table-layout: fixed;
    font-size: 8px;
    line-height: 12px;
  }

  th,
  td {
    padding: 0 0 0 4px;
    overflow: hidden;
    font-weight: inherit;
    text-align: left;
  }

  th:first-child,
  td:first-child {
    width: 352px;
    border-right: 1px solid #434348;
  }

  .memory-bar {
    width: 10px;
    background: #232325;
  }

  .memory-bar span {
    display: block;
    height: 21px;
    margin: 1px;
    border-radius: 3px;
    background: #555558;
  }

  .props {
    width: 160px;
    border-left: 2px solid #3c3c42;
  }

  .focused {
    background: #294a7a;
  }

  .focused .panel-tab {
    background: #3264a8;
  }
</style>
